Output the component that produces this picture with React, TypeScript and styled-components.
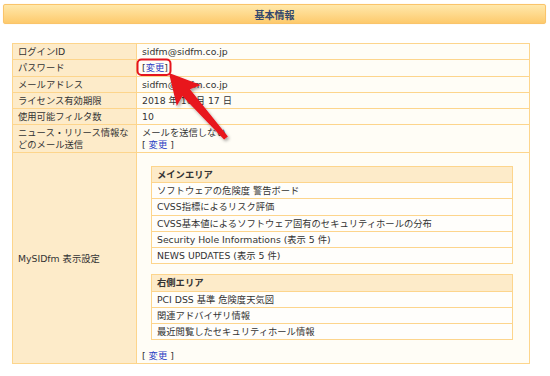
import React from 'react';
import styled, { createGlobalStyle } from 'styled-components';

const GlobalStyle = createGlobalStyle`
  body {
    margin: 0;
    background: #ffffff;
    font-family: 'DejaVu Sans', 'Noto Sans CJK JP', sans-serif;
    font-size: 9.3px;
    color: #333333;
  }
`;

type Row = { label: React.ReactNode; value: React.ReactNode };

const mainArea = [
  'ソフトウェアの危険度 警告ボード',
  'CVSS指標によるリスク評価',
  'CVSS基本値によるソフトウェア固有のセキュリティホールの分布',
  'Security Hole Informations (表示 5 件)',
  'NEWS UPDATES (表示 5 件)',
];

const rightArea = ['PCI DSS 基準 危険度天気図', '関連アドバイザリ情報', '最近閲覧したセキュリティホール情報'];

const ChangeLink: React.FC<{ spaced?: boolean }> = ({ spaced }) =>
  spaced ? (
    <span>
      [ <Link>変更</Link> ]
    </span>
  ) : (
    <span>
      [<Link>変更</Link>]
    </span>
  );

const rows: Row[] = [
  { label: 'ログインID', value: 'sidfm@sidfm.co.jp' },
  { label: 'パスワード', value: <ChangeLink /> },
  { label: 'メールアドレス', value: 'sidfm@sidfm.co.jp' },
  { label: 'ライセンス有効期限', value: '2018 年 10 月 17 日' },
  { label: '使用可能フィルタ数', value: '10' },
  {
    label: (
      <>
        ニュース・リリース情報な
        <br />
        どのメール送信
      </>
    ),
    value: (
      <>
        メールを送信しない
        <br />
        <ChangeLink spaced />
      </>
    ),
  },
];

const AreaTable: React.FC<{ title: string; items: string[] }> = ({ title, items }) => (
  <SubTable>
    <tbody>
      <tr>
        <SubHead>{title}</SubHead>
      </tr>
      {items.map(item => (
        <tr key={item}>
          <SubCell>{item}</SubCell>
        </tr>
      ))}
    </tbody>
  </SubTable>
);

const App: React.FC = () => (
  <Page>
    <GlobalStyle />
    <TitleBar>基本情報</TitleBar>
    <InfoTable>
      <tbody>
        {rows.map((row, i) => (
          <tr key={i}>
            <LabelCell>{row.label}</LabelCell>
            <ValueCell>{row.value}</ValueCell>
          </tr>
        ))}
        <tr>
          <LabelCell $middle>MySIDfm 表示設定</LabelCell>
          <ValueCell>
            <Areas>
              <AreaTable title="メインエリア" items={mainArea} />
              <AreaTable title="右側エリア" items={rightArea} />
            </Areas>
            <ChangeLink spaced />
          </ValueCell>
        </tr>
      </tbody>
    </InfoTable>

    {/* red callout drawn over the screenshot */}
    <Annotation width="550" height="376" viewBox="0 0 550 376">
      <defs>
        <filter id="shadow" x="-30%" y="-30%" width="160%" height="160%">
          <feDropShadow dx="1.5" dy="2" stdDeviation="1.5" floodColor="#000" floodOpacity="0.35" />
        </filter>
      </defs>
      <rect x="137.5" y="59.5" width="33" height="15.5" rx="4" fill="none" stroke="#e5141c" strokeWidth="2" />
      <polygon
        filter="url(#shadow)"
        fill="#e8121b"
        points="169,73 200.8,85.1 189.9,89.3 227.9,136.4 224.1,139.6 182.3,95.9 176.8,106.1"
      />
    </Annotation>
  </Page>
);

const Page = styled.div`
  position: relative;
  width: 550px;
  height: 376px;
  padding: 4px 4px 0 3px;
  box-sizing: border-box;
  overflow: hidden;
`;

const TitleBar = styled.div`
  height: 20px;
  box-sizing: border-box;
  border: 1px solid #fac46a;
  border-radius: 2px;
  background: linear-gradient(#ffe8ab, #fdca6d);
  box-shadow: 0 0 1px #fde2a8;
  display: flex;
  align-items: center;
  justify-content: center;
  font-weight: bold;
  font-size: 10px;
  color: #34486c;
`;

const InfoTable = styled.table`
  margin: 19px 16px 0 9px;
  width: calc(100% - 25px);
  border-collapse: collapse;
  border: 1px solid #fdd58c;
`;

const LabelCell = styled.td<{ $middle?: boolean }>`
  width: 113px;
  padding: 2px 5px;
  line-height: 11.3px;
  white-space: nowrap;
  background: #fdebc9;
  border: 1px solid #fdd58c;
  vertical-align: ${p => (p.$middle ? 'middle' : 'top')};
`;

const ValueCell = styled.td`
  padding: 2px 5px;
  line-height: 11.3px;
  background: #fffdf6;
  border: 1px solid #fdd58c;
  vertical-align: top;
`;

const Link = styled.a`
  color: #2b3fc4;
  cursor: pointer;
`;

const Areas = styled.div`
  display: flex;
  flex-direction: column;
  gap: 10px;
  margin: 11px 11px 10px 9px;
`;

const SubTable = styled.table`
  width: 100%;
  border-collapse: collapse;
  border: 1px solid #fdd58c;
`;

const SubHead = styled.td`
  padding: 2px 5px;
  line-height: 11.2px;
  font-weight: bold;
  background: #fdebc9;
  border: 1px solid #fdd58c;
`;

const SubCell = styled.td`
  padding: 2px 5px;
  line-height: 11.2px;
  background: #fffefb;
  border: 1px solid #fdd58c;
`;

const Annotation = styled.svg`
  position: absolute;
  left: 0;
  top: 0;
  pointer-events: none;
`;

export default App;
